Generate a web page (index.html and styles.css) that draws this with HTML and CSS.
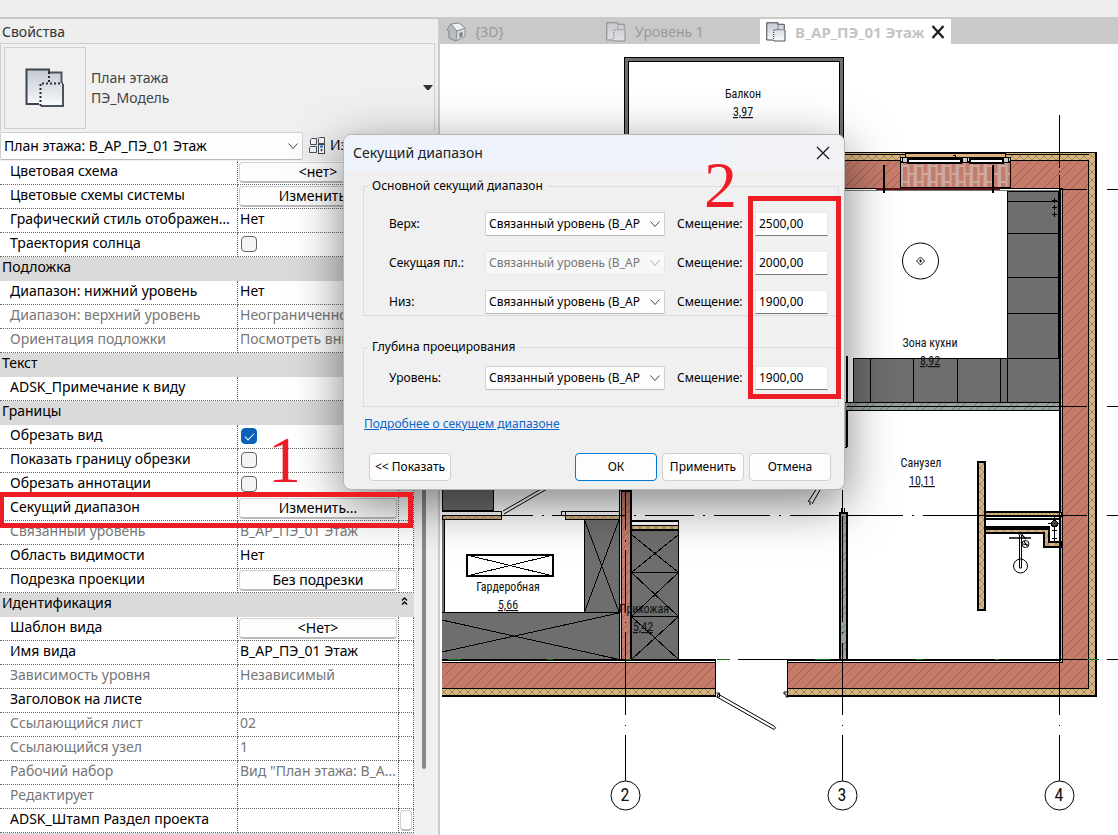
FILE: index.html
```html
<!DOCTYPE html>
<html lang="ru">
<head>
<meta charset="utf-8">
<title>Секущий диапазон</title>
<link rel="stylesheet" href="styles.css">
</head>
<body>
<svg class="defs" aria-hidden="true">
  <defs>
    <linearGradient id="sheet" x1="0" y1="0" x2="0" y2="1"><stop offset="0" stop-color="#c3c8d2"/><stop offset="1" stop-color="#fafbfc"/></linearGradient>
    <symbol id="plan" viewBox="0 0 40 40">
      <path d="M1.500 1.500H24v3H37V15H38V38H15.500V36H1.500Z" fill="url(#sheet)"/>
      <path d="M24 4V1.500H1.500V36H14" fill="none" stroke="#3c4450" stroke-width="2"/>
      <path d="M24 4.500H36.500V15M38 16V38H16" fill="none" stroke="#4a5260" stroke-width="2"/>
      <path d="M24 4V15M15.500 38V15.500H38" fill="none" stroke="#262c36" stroke-width="2" stroke-dasharray="2 2"/>
    </symbol>
    <symbol id="chev" viewBox="0 0 12 12"><path d="M1.500 3.500L6 8.500L10.500 3.500" fill="none" stroke="currentColor"/></symbol>
  </defs>
</svg>
<header class="ribbon"></header>
<main class="main">
  <section class="panel">
    <h2 class="panel-title">Свойства</h2>
    <div class="type">
      <div class="thumb"><svg width="40" height="40"><use href="#plan"/></svg></div>
      <div class="type-name">План этажа<br>ПЭ_Модель</div>
      <svg class="caret" width="10" height="6"><path d="M0 0H10L6 5H4Z" fill="#333"/></svg>
    </div>
    <div class="picker">
      <label class="combo view">
        <select aria-label="Вид"><option>План этажа: В_АР_ПЭ_01 Этаж</option></select>
        <svg class="chev" width="12" height="12"><use href="#chev"/></svg>
      </label>
      <button class="edit-type" type="button">
        <svg width="17" height="17" viewBox="0 0 17 17"><path d="M2.500 1.500h5v6h-6v-5ZM9.500 1.500l1-1h5v6h-6ZM.5 10.500l1-1h6v6h-7ZM7.500 1.500l1-1M15.500 6.500l-1 1" fill="#f2f4f6" stroke="#4a4f58"/><rect x="9.500" y="7.500" width="6" height="9" fill="#fff" stroke="#3c4450"/><path d="M11 9.500h3" stroke="#1769c0" stroke-width="2"/><path d="M11 13h3M12.500 11.500v3" stroke="#556"/></svg>
        Изменить тип
      </button>
    </div>
    <div class="props">
      <table class="grid">
        <colgroup><col class="c-name"><col class="c-val"><col class="c-eq"></colgroup>
        <tr><td>Цветовая схема</td><td class="ctl"><button type="button">&lt;нет&gt;</button></td><td></td></tr>
        <tr><td>Цветовые схемы системы</td><td class="ctl"><button type="button">Изменить...</button></td><td></td></tr>
        <tr><td>Графический стиль отображения по умолчанию</td><td>Нет</td><td></td></tr>
        <tr><td>Траектория солнца</td><td class="ctl"><input type="checkbox" aria-label="Траектория солнца"></td><td></td></tr>
        <tr class="group"><th colspan="3">Подложка</th></tr>
        <tr><td>Диапазон: нижний уровень</td><td>Нет</td><td></td></tr>
        <tr class="off"><td>Диапазон: верхний уровень</td><td>Неограниченно</td><td></td></tr>
        <tr class="off"><td>Ориентация подложки</td><td>Посмотреть вниз</td><td></td></tr>
        <tr class="group"><th colspan="3">Текст</th></tr>
        <tr><td>ADSK_Примечание к виду</td><td></td><td></td></tr>
        <tr class="group"><th colspan="3">Границы</th></tr>
        <tr><td>Обрезать вид</td><td class="ctl"><input type="checkbox" checked aria-label="Обрезать вид"></td><td></td></tr>
        <tr><td>Показать границу обрезки</td><td class="ctl"><input type="checkbox" aria-label="Показать границу обрезки"></td><td></td></tr>
        <tr><td>Обрезать аннотации</td><td class="ctl"><input type="checkbox" aria-label="Обрезать аннотации"></td><td></td></tr>
        <tr><td>Секущий диапазон</td><td class="ctl"><button type="button">Изменить...</button></td><td></td></tr>
        <tr class="off"><td>Связанный уровень</td><td>В_АР_ПЭ_01 Этаж</td><td></td></tr>
        <tr><td>Область видимости</td><td>Нет</td><td></td></tr>
        <tr><td>Подрезка проекции</td><td class="ctl"><button type="button">Без подрезки</button></td><td></td></tr>
        <tr class="group"><th colspan="3"><span class="group-head">Идентификация<svg width="7" height="8" viewBox="0 0 7 8"><path d="M1 3.500L3.500 1L6 3.500M1 7.500L3.500 5L6 7.500" fill="none" stroke="#000" stroke-width="1.400"/></svg></span></th></tr>
        <tr><td>Шаблон вида</td><td class="ctl"><button type="button">&lt;Нет&gt;</button></td><td></td></tr>
        <tr><td>Имя вида</td><td>В_АР_ПЭ_01 Этаж</td><td></td></tr>
        <tr class="off"><td>Зависимость уровня</td><td>Независимый</td><td></td></tr>
        <tr><td>Заголовок на листе</td><td></td><td></td></tr>
        <tr class="off"><td>Ссылающийся лист</td><td>02</td><td></td></tr>
        <tr class="off"><td>Ссылающийся узел</td><td>1</td><td></td></tr>
        <tr class="off"><td>Рабочий набор</td><td>Вид "План этажа: В_АР_ПЭ_01"</td><td></td></tr>
        <tr class="off"><td>Редактирует</td><td></td><td></td></tr>
        <tr><td>ADSK_Штамп Раздел проекта</td><td></td><td class="ctl"><button type="button" aria-label="Связать"></button></td></tr>
        <tr class="group"><th colspan="3"></th></tr>
      </table>
      <div class="scroll"><div class="thumb-bar"></div></div>
    </div>
  </section>

  <section class="work">
    <nav class="tabs">
      <a class="tab" href="#d3"><svg width="20" height="20" viewBox="0 0 20 20"><path d="M1 8L5 2L13 1L19 6V14L10 19L3 16V9Z" fill="#d9dade" stroke="#8b8f96"/><path d="M1 8L5 2L11 9L10 19L3 16V9ZM11 9L19 6" fill="#b9bcc2" stroke="#8b8f96"/><path d="M5 2L13 1L19 6L11 9Z" fill="#f0f0f2" stroke="#8b8f96"/><path d="M13.500 11l3-1v4l-3 1.500z" fill="#777b82"/></svg>{3D}</a>
      <a class="tab" href="#l1"><svg class="pale" width="20" height="20"><use href="#plan"/></svg>Уровень 1</a>
      <a class="tab active" href="#l2"><svg width="20" height="20"><use href="#plan"/></svg>В_АР_ПЭ_01 Этаж<svg class="close" width="14" height="14"><path d="M1.500 1L12.500 13M12.500 1L1.500 13" stroke="#222" stroke-width="2.400"/></svg></a>
    </nav>
    <svg class="plan">
      <defs>
        <pattern id="brick" width="20" height="20" patternUnits="userSpaceOnUse"><rect width="20" height="20" fill="#c67c6b"/><path d="M-1 21L21 -1M-1 13L13 -1M11 21L21 11" fill="none" stroke="#93584b" stroke-width="0.800"/></pattern>
        <pattern id="wool" width="8" height="8" patternUnits="userSpaceOnUse"><rect width="8" height="8" fill="#d6b582"/><path d="M0 0L8 8M8 0L0 8" stroke="#98804f" stroke-width="0.800"/></pattern>
        <pattern id="block" width="18" height="18" patternUnits="userSpaceOnUse"><rect width="18" height="18" fill="#98a39d"/><path d="M-1 19L19 -1M-1 13L13 -1M11 19L19 11" stroke="#5c6862" stroke-width="0.800"/></pattern>
        <pattern id="sill" width="14" height="24" patternUnits="userSpaceOnUse" x="901" y="160"><rect width="14" height="24" fill="#c67c6b"/><path d="M1 0V24M7.500 0V24M13.500 0V24M1 6H7M8 14H14M1 22H7" stroke="#cba8a0" stroke-width="2"/></pattern>
      </defs>
      <g transform="translate(-440 -44)" shape-rendering="crispEdges" stroke="#000" fill="none">
        <g id="balcony">
          <path d="M624.500 140V57.500H843.500V140H839.500V61.500H628.500V140Z" fill="#6e6e6e"/>
        </g>
        <g id="outer-walls">
          <path d="M840 152.500H1097V697H787V662H1060V189H840Z" fill="url(#wool)" stroke="none"/>
          <path d="M840 160.500H1088.500V688.500H787.500V662.500H1062V188.500H840Z" fill="url(#brick)"/>
          <path d="M840 152.500H1096M840 154.500H1089" />
          <path d="M1060.500 189V661M787 660.500H1061" />
          <path d="M840 190.500H1060" stroke="#777"/>
          <path d="M1096 152V696H787" stroke-width="2"/>
          <path d="M442 660.500H716M787.500 660V697"/>
          <rect x="442" y="688" width="274" height="8" fill="url(#wool)" stroke="none"/>
          <rect x="442" y="662" width="274" height="26" fill="url(#brick)" stroke="none"/>
          <path d="M442 662.500H716M442 688.500H716"/>
          <path d="M442 696H716" stroke-width="2"/><path d="M715.500 660V696"/>
        </g>
        <g id="window">
          <rect x="905.500" y="153.500" width="100" height="4" fill="#d9b27c"/>
          <rect x="900.500" y="162.500" width="110" height="25" fill="url(#sill)"/>
          <rect x="900.500" y="157.500" width="110" height="4" fill="#ddd"/>
          <rect x="908" y="159" width="53" height="4" fill="#fff" stroke-width="2"/><rect x="970" y="159" width="33" height="4" fill="#fff" stroke-width="2"/>
          <rect x="902.500" y="157.500" width="5" height="5" fill="#ccc"/><rect x="962.500" y="157.500" width="5" height="5" fill="#ccc"/><rect x="1003.500" y="157.500" width="5" height="5" fill="#ccc"/>
          <path d="M876 188.500H1000" stroke="#5a1015" stroke-width="2"/>
          <path d="M884 165V193M993 165V193" stroke-width="2"/>
          <path d="M953 155h3l-1 4" stroke-width="1"/>
        </g>
        <g id="kitchen" fill="#6e6e6e">
          <rect x="1007.500" y="191.500" width="51" height="167"/>
          <path d="M1007 201.500H1059M1007 233.500H1059M1007 277.500H1059M1007 313.500H1059"/>
          <path d="M1052 200.500h5M1054.500 198v5M1052 207.500h5M1054.500 205v5M1052 214.500h5M1054.500 212v5"/>
          <rect x="853.500" y="358.500" width="206" height="44"/>
          <path d="M870.500 358V402M913.500 358V402M957.500 358V402M1000.500 358V402M1007.500 358V402M1059 191V358"/>
        </g>
        <g id="lamp" shape-rendering="auto"><circle cx="920.500" cy="261" r="18"/><path d="M920.500 257L924.500 261L920.500 265L916.500 261ZM919 261h3M920.500 259.500v3" stroke-width="0.900"/></g>
        <g id="partitions">
          <rect x="843" y="402.500" width="217" height="8" fill="url(#block)"/>
          <path d="M843 410h4V447h-4" fill="#98a39d" stroke="none"/><path d="M846.500 356V402M846.500 410V447" stroke-width="2"/><path d="M843 447.500h4"/>
          <rect x="839.500" y="513" width="7" height="147" fill="url(#block)" stroke-width="2"/>
          <path d="M841 508v6M844 508v6" />
          <rect x="978" y="462" width="7" height="148" fill="url(#wool)" stroke-width="2"/>
          <rect x="985.500" y="512.500" width="76" height="4" fill="url(#wool)"/>
          <path d="M985 512H1061M985 518.500H1061M985.500 526.500H1050" stroke-width="2"/>
          <path d="M985 529H1049V542H1061V547H1044V533H985Z" fill="url(#wool)" stroke-width="1.500"/>
          <path d="M1047.500 523.500h13M1054.500 516v26M1052 530.500h5M1052 538.500h5"/><circle cx="1054.500" cy="523.500" r="3" fill="#444"/>
        </g>
        <g id="sanitary" shape-rendering="auto"><circle cx="1020.500" cy="566" r="7"/><path d="M1019.500 535V568H1021.500V535"/><path d="M1009 538h22" stroke-width="1.500"/><circle cx="1025.500" cy="544" r="3.500"/><path d="M1022 535l4 4M1023 544l5 1M1024 541l3 5M1018 534h5" stroke-width="1.200"/></g>
        <g id="wardrobe">
          <rect x="442" y="480" width="51.500" height="30.500" fill="#6e6e6e"/>
          <path d="M442 511.500H501.500V519H442M565.500 511V519M565.500 511.500H620" stroke-width="1.500"/>
          <rect x="442" y="515.500" width="59" height="4" fill="url(#wool)"/><rect x="565.500" y="515.500" width="54" height="4" fill="url(#wool)"/>
          <rect x="561.500" y="511.500" width="4" height="4" fill="#fff"/>
          <path d="M503 511L541 489M504 514L547 489M808 502L817 488M812 504L820 490M810 501v4" shape-rendering="auto"/>
          <rect x="584.500" y="519.500" width="35" height="93" fill="#6e6e6e"/><path d="M584.500 520L619 612M619 520L584.500 612"/>
          <rect x="442" y="519.500" width="2.500" height="93" fill="#6e6e6e" stroke="none"/><path d="M444.500 519V612"/>
          <rect x="442" y="612" width="177" height="47" fill="#6e6e6e" stroke="none"/><path d="M442 612.500H619.500V659M442 620L617 659M442 652L619 613"/>
          <rect x="467" y="555" width="86" height="21" fill="#fff" stroke-width="2"/><path d="M467 555L553 576M553 555L467 576"/>
          <path d="M631.500 525.500H678.500V659H631.500Z" fill="#6e6e6e"/>
          <rect x="631.500" y="521" width="47" height="4" fill="#fff"/><rect x="631.500" y="525.500" width="47" height="4" fill="url(#wool)"/><path d="M631 521H679M631 529.500H679" stroke-width="2"/>
          <path d="M632 572.500H679M632 616.500H679M632 535L678 572M678 535L632 572M632 573L678 616M678 573L632 616M632 617L678 659M678 617L632 659"/>
          <rect x="619.500" y="490" width="12" height="169" fill="#ccd1ce"/><rect x="621.500" y="491" width="9" height="168" fill="url(#brick)"/>
        </g>
        <g id="entry" shape-rendering="auto">
          <path d="M718 694L774 726Q777 728 774 729.500L717 697Z" fill="#fff"/><path d="M716.500 693h3v4h-3M787 692h-3v2h2v3h2"/>
        </g>
        <g id="axes">
          <path d="M1059.500 115V168M1059.500 171v1M1059.500 175V715M1059.500 725v1M1059.500 735V781"/>
          <path d="M842.500 490V512M842.500 516V622M842.500 632v1M842.500 643V715M842.500 725v1M842.500 735V781"/>
          <path d="M625.500 490V530M625.500 540v2M625.500 550V612M625.500 622v1M625.500 632V715M625.500 725v1M625.500 735V781"/>
          <path d="M1060 189.500H1087M1107 189.500H1118M847 406.500H1087M1107 406.500H1118M848 515.500H903M912 515.500h2M923 515.500H1087M1107 515.500H1118M501 515.500H533M542 515.500h2M552 515.500H626M634 515.500h2M645 515.500H694M703 515.500h2M714 515.500H770M779 515.500h2M790 515.500H840M442 659.500H716M738 659.500H1087M1107 659.500H1118"/>
          <path d="M448 659.500h13M547 659.500h6M626 659.500h5M717 659.500h13M815 659.500h15M916 659.500h7M995 659.500h4M1087 659.500h12" stroke="#117a1c"/>
          <g shape-rendering="auto" fill="#fff"><circle cx="625.500" cy="795.500" r="14.500"/><circle cx="842.500" cy="795.500" r="14.500"/><circle cx="1059.500" cy="795.500" r="14.500"/></g>
        </g>
        <g class="labels">
          <text x="743" y="98">Балкон</text><text class="area" x="743" y="116">3,97</text>
          <text x="930" y="347">Зона кухни</text><text class="area" x="930" y="365">8,92</text>
          <text x="921" y="467">Санузел</text><text class="area" x="922" y="485">10,11</text>
          <text x="508" y="591">Гардеробная</text><text class="area" x="508" y="609">5,66</text>
          <text x="644" y="613">Прихожая</text><text class="area" x="643" y="631">5,42</text>
          <text class="axis" x="625" y="801">2</text><text class="axis" x="842" y="801">3</text><text class="axis" x="1059" y="801">4</text>
        </g>
      </g>
    </svg>
  </section>
</main>

<form class="dialog" role="dialog" aria-labelledby="dlg">
  <div class="dialog-head">
    <h1 id="dlg">Секущий диапазон</h1>
    <button class="x" type="button" aria-label="Закрыть"><svg width="14" height="14"><path d="M1 1L13 13M13 1L1 13" stroke="#111" stroke-width="1.200"/></svg></button>
  </div>
  <div class="dialog-body">
    <fieldset class="main-range">
      <legend>Основной секущий диапазон</legend>
      <div class="row"><label for="s1">Верх:</label><span class="combo"><select id="s1"><option>Связанный уровень (В_АР_ПЭ_01 Этаж)</option></select><svg class="chev" width="12" height="12"><use href="#chev"/></svg></span><label for="o1">Смещение:</label><input id="o1" type="text" value="2500,00"></div>
      <div class="row"><label for="s2">Секущая пл.:</label><span class="combo off"><select id="s2" disabled><option>Связанный уровень (В_АР_ПЭ_01 Этаж)</option></select><svg class="chev" width="12" height="12"><use href="#chev"/></svg></span><label for="o2">Смещение:</label><input id="o2" type="text" value="2000,00"></div>
      <div class="row"><label for="s3">Низ:</label><span class="combo"><select id="s3"><option>Связанный уровень (В_АР_ПЭ_01 Этаж)</option></select><svg class="chev" width="12" height="12"><use href="#chev"/></svg></span><label for="o3">Смещение:</label><input id="o3" type="text" value="1900,00"></div>
    </fieldset>
    <fieldset class="depth">
      <legend>Глубина проецирования</legend>
      <div class="row"><label for="s4">Уровень:</label><span class="combo"><select id="s4"><option>Связанный уровень (В_АР_ПЭ_01 Этаж)</option></select><svg class="chev" width="12" height="12"><use href="#chev"/></svg></span><label for="o4">Смещение:</label><input id="o4" type="text" value="1900,00"></div>
    </fieldset>
    <a class="more" href="#help">Подробнее о секущем диапазоне</a>
    <div class="actions">
      <button class="show" type="button">&lt;&lt; Показать</button>
      <button class="ok" type="button">ОК</button>
      <button type="button">Применить</button>
      <button type="button">Отмена</button>
    </div>
  </div>
</form>
<div class="mark mark-row"></div>
<div class="mark mark-inputs"></div>
<span class="num num-one">1</span>
<span class="num num-two">2</span>
</body>
</html>
```

FILE: styles.css
```css
* { box-sizing: border-box; }
body {
  margin: 0;
  height: 100vh;
  overflow: hidden;
  position: relative;
  display: flex;
  flex-direction: column;
  background: #eee;
  color: #000;
  font: 14px/20px "Noto Sans", sans-serif;
}
button, input, select { font: inherit; color: inherit; margin: 0; }
.defs { position: absolute; width: 0; height: 0; }
.ribbon { flex: none; height: 19px; background: #eee; border-bottom: 2px solid #c9c9c9; }
.main { flex: 1; min-height: 0; display: flex; }

.panel { flex: none; width: 440px; display: flex; flex-direction: column; border-right: 2px solid #cbcbcb; }
.panel-title { margin: 0; padding: 3px 2px 0; height: 24px; font-size: 14px; font-weight: 400; color: #333; }
.type {
  display: flex;
  align-items: center;
  gap: 5px;
  height: 88px;
  margin-right: 3px;
  padding: 1px 1px 0 3px;
  border: 1px solid #cfcfcf;
  border-bottom: 0;
  background: #f0f0f0;
  color: #444;
}
.thumb { display: flex; align-items: center; justify-content: center; width: 82px; height: 82px; border: 1px solid #cfcfcf; }
.type-name { flex: 1; }
.picker { display: flex; align-items: center; gap: 6px; height: 30px; }
.combo { display: grid; align-items: center; }
.combo select {
  grid-area: 1 / 1;
  appearance: none;
  width: 100%;
  height: 24px;
  padding: 0 24px 0 3px;
  border: 1px solid #d0d0d0;
  border-bottom-color: #b8b8b8;
  border-radius: 2px;
  background: #fdfdfd;
}
.combo .chev { grid-area: 1 / 1; justify-self: end; margin-right: 4px; color: #444; pointer-events: none; }
.view { width: 303px; }
.view select { height: 28px; }
.edit-type { flex: 1; display: flex; align-items: center; gap: 4px; padding: 0 0 2px; border: 0; background: none; white-space: nowrap; overflow: hidden; }
.edit-type svg { flex: none; }

.props { flex: 1; min-height: 0; display: flex; overflow: hidden; background: #f0f0f0; }
.grid { flex: none; width: 414px; table-layout: fixed; border-spacing: 0; align-self: flex-start; }
.c-name { width: 238px; }
.c-val { width: 161px; }
.c-eq { width: 15px; }
.grid td, .grid th {
  height: 24px;
  padding: 0 0 3px 2px;
  line-height: 20px;
  vertical-align: top;
  overflow: hidden;
  white-space: nowrap;
  text-overflow: ellipsis;
  border-bottom: 1px dotted #666;
}
.grid td { background: #fff; border-right: 1px dotted #666; }
.grid td:first-child { padding-left: 10px; }
.grid .ctl { padding-bottom: 0; }
.grid th { background: #dadada; border-bottom: 0; font-weight: 400; text-align: left; }
.off { color: #777; }
.group-head { display: flex; justify-content: space-between; align-items: flex-start; padding: 0 6px 0 0; }
.group-head svg { margin-top: 4px; }
.grid button {
  display: block;
  width: 100%;
  height: 21px;
  margin: 1px 0 0 -1px;
  padding: 0;
  line-height: 18px;
  background: #fdfdfd;
  border: 1px solid #d0d0d0;
  border-bottom: 2px solid #bbb;
  border-radius: 4px;
}
.grid input {
  appearance: none;
  display: block;
  width: 16px;
  height: 16px;
  margin: 3px 0 0 1px;
  border: 1px solid #666;
  border-radius: 4px;
  background: #f4f4f4;
}
.grid input:checked { background: #0860b8; border-color: #0860b8; padding: 3px; }
.grid input:checked::before { content: ""; display: block; width: 8px; height: 4px; margin-top: 1px; border: solid #fff; border-width: 0 0 1px 1px; transform: rotate(-45deg); }
.scroll { flex: 1; padding-left: 8px; height: 608px; }
.thumb-bar { width: 4px; height: 100%; border-radius: 2px; background: #888; }

.work { flex: 1; min-width: 0; display: flex; flex-direction: column; }
.tabs { flex: none; display: flex; height: 25px; background: #c9c9c9; }
.tab { display: flex; align-items: center; gap: 9px; width: 160px; padding-left: 6px; color: #999; text-decoration: none; white-space: nowrap; }
.tab.active { width: 191px; background: #fff; color: #c4c4c4; font-size: 15px; font-weight: 700; }
.close { margin-left: -3px; }
.pale { opacity: .5; }
.plan { flex: 1; min-height: 0; width: 100%; background: #fff; }
.labels { fill: #111; stroke: none; text-anchor: middle; font: 12px "Roboto Condensed", Roboto, sans-serif; }
.area { text-decoration: underline; }
.axis { font-size: 18px; }

.dialog {
  position: absolute;
  left: 343px;
  top: 134px;
  width: 502px;
  border: 1px solid #b5b5b5;
  border-radius: 8px;
  background: #f0f0f0;
  box-shadow: 0 14px 50px rgba(0, 0, 0, .5);
  font: 12px/16px "Noto Sans", sans-serif;
  overflow: hidden;
}
.dialog-head { display: flex; align-items: center; justify-content: space-between; height: 36px; padding: 0 14px 0 9px; background: linear-gradient(90deg, #eff3fb 60%, #f2f2f5); }
.dialog-head h1 { margin: 0; font-size: 14px; line-height: 20px; font-weight: 400; color: #222; }
.x { display: flex; padding: 0; border: 0; background: none; }
.dialog-body { padding: 7px 5px 8px 19px; }
.dialog fieldset { margin: 0; padding: 18px 10px 1px 25px; border: 1px solid #dcdcdc; display: grid; gap: 15px; }
.dialog legend { padding: 0 4px; margin-left: -21px; }
.dialog .depth { margin-top: 23px; padding: 11px 10px 16px 25px; }
.row { display: grid; grid-template-columns: 96px 180px 90px 73px; align-items: center; height: 24px; white-space: nowrap; }
.row label:nth-of-type(2) { margin-left: 12px; }
.row .combo select { color: #000; }
.row .combo.off select { color: #777; border-color: #e8e8e8; background: #f8f8f8; opacity: 1; }
.row .combo.off .chev { color: #aaa; }
.row input { width: 100%; height: 24px; padding: 0 3px 2px; border: 1px solid #eaeaea; border-bottom-color: #777; border-radius: 0; background: #fff; }
.more { display: block; margin: 9px 0 0 1px; color: #0a66cc; }
.actions { display: grid; grid-template-columns: 82px 1fr 82px 82px 82px; column-gap: 5px; margin: 21px 8px 0 6px; }
.actions button { height: 28px; padding: 0; border: 1px solid #d0d0d0; border-radius: 4px; background: #fdfdfd; white-space: nowrap; }
.actions .ok { grid-column: 3; }
.actions button.ok { border-color: #0078d4; }

.mark { position: absolute; border: 5px solid #ee1c25; pointer-events: none; }
.mark-row { left: 0; top: 492px; width: 413px; height: 36px; border-left-width: 4px; }
.mark-inputs { left: 748px; top: 196px; width: 93px; height: 203px; }
.num { position: absolute; color: #ee1c25; font: 66px/66px "Liberation Serif", serif; }
.num-one { left: 268px; top: 427px; }
.num-two { left: 704px; top: 152px; }
```
